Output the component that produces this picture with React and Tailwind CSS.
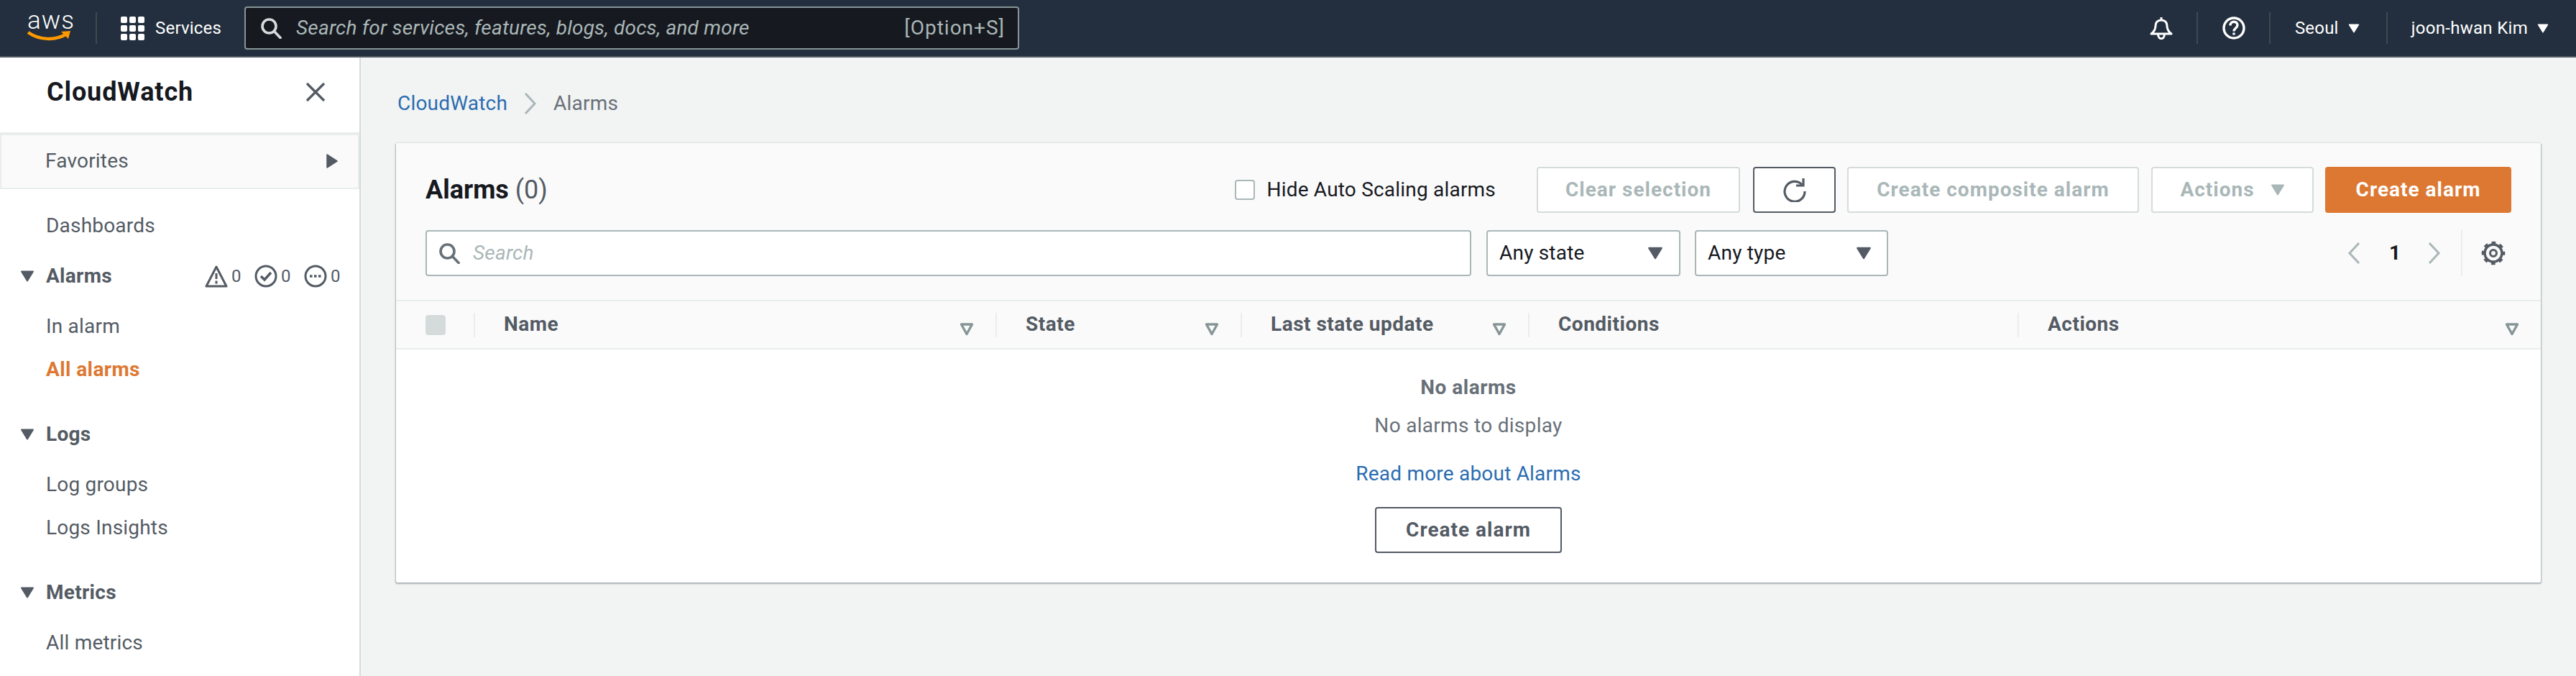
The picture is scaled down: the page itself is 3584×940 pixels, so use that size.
import React from 'react';

const fontStack = "Roboto, 'Noto Sans', sans-serif";

function Caret({ className }) {
  return (
    <svg viewBox="0 0 20 16" className={className}>
      <path d="M2 1.5h16L10 14.5z" fill="currentColor" stroke="currentColor" strokeWidth="2" strokeLinejoin="round" />
    </svg>
  );
}

function SortIcon({ className }) {
  return (
    <svg viewBox="0 0 20 18" className={`w-[20px] h-[18px] text-[#879596] ${className}`}>
      <path d="M2.5 2h15L10 15.5z" fill="none" stroke="currentColor" strokeWidth="3.4" strokeLinejoin="round" />
    </svg>
  );
}

function SearchIcon({ className }) {
  return (
    <svg viewBox="0 0 30 30" className={className} fill="none" stroke="currentColor" strokeWidth="3.6">
      <circle cx="12.5" cy="12.5" r="9.5" />
      <path d="M19.5 19.5L28 28.5" strokeLinecap="square" />
    </svg>
  );
}

function Chevron({ dir, className }) {
  return (
    <svg viewBox="0 0 18 30" className={className} fill="none" stroke="currentColor" strokeWidth="3">
      <path d={dir === 'left' ? 'M16 1L3 15l13 14' : 'M2 1l13 14L2 29'} />
    </svg>
  );
}

function Gear({ className }) {
  return (
    <svg viewBox="0 0 34 34" className={className} fill="none" stroke="currentColor">
      <circle cx="17" cy="17" r="12" strokeWidth="3.4" />
      <circle cx="17" cy="17" r="14.5" strokeWidth="3.6" strokeDasharray="5.6 5.79" strokeDashoffset="2.8" />
      <circle cx="17" cy="17" r="4.5" strokeWidth="3" />
    </svg>
  );
}

function NavItem({ children, top, active, bold, caret }) {
  return (
    <div className={`relative h-[60px] pb-[2px] flex items-center pl-[64px] text-[28px] ${top} ${active ? 'text-[#dd7832] font-bold tracking-[0.4px]' : 'text-[#545b64]'} ${bold ? 'font-bold tracking-[0.3px]' : ''}`}>
      {caret && <Caret className="absolute left-[28px] top-[21px] w-[20px] h-[16px] text-[#545b64]" />}
      {children}
    </div>
  );
}

function Header({ children, width, sort }) {
  return (
    <div className={`relative flex items-center h-[34px] pb-[2px] border-l-2 border-[#eaeded] pl-[40px] text-[28px] font-bold tracking-[0.5px] text-[#545b64] ${width}`}>
      {children}
      {sort && <SortIcon className="absolute right-[30px] top-[14px]" />}
    </div>
  );
}

function Button({ children, width, className }) {
  return (
    <button className={`h-[64px] rounded-[4px] border-2 flex items-center justify-center text-[28px] font-bold tracking-[1px] ${width} ${className}`}>
      {children}
    </button>
  );
}

export default function App() {
  return (
    <div style={{ fontFamily: fontStack }} className="h-[940px] w-[3584px] overflow-hidden flex flex-col bg-[#f2f3f3] tracking-[0.2px]">
      {/* top nav */}
      <nav className="h-[80px] shrink-0 bg-[#232f3e] border-b-2 border-[#545b64] flex items-center text-white">
        <div className="relative ml-[38px] w-[60px] h-[44px] shrink-0">
          <span className="absolute -top-[8px] left-0 text-[35px] leading-[40px] font-light tracking-[1px]">aws</span>
          <svg viewBox="0 0 60 14" className="absolute left-0 top-[26px] w-[60px] h-[14px]">
            <path d="M1 2c16 11 38 12 54 2" fill="none" stroke="#f90" strokeWidth="4.5" />
            <path d="M47 1l13-1-3 11z" fill="#f90" />
          </svg>
        </div>
        <div className="ml-[35px] w-[2px] h-[44px] bg-[#414750] shrink-0" />
        <div className="ml-[33px] grid grid-cols-3 gap-[3px] w-[33px] shrink-0">
          {[0, 1, 2, 3, 4, 5, 6, 7, 8].map((i) => (
            <span key={i} className="h-[9px] rounded-[2px] bg-white" />
          ))}
        </div>
        <span className="ml-[15px] text-[24px] w-[124px] shrink-0">Services</span>
        <div className="w-[1078px] h-[60px] rounded-[4px] border-2 border-[#879596] bg-[#16191f] flex items-center pl-[20px] pr-[18px] text-[#aab7b8] shrink-0">
          <SearchIcon className="w-[30px] h-[30px] text-[#d5dbdb]" />
          <span className="ml-[20px] italic text-[28px]">Search for services, features, blogs, docs, and more</span>
          <span className="ml-auto text-[28px] tracking-[1px]">[Option+S]</span>
        </div>
        <svg viewBox="0 0 32 32" className="ml-auto w-[32px] h-[32px]" fill="none" stroke="white" strokeWidth="3" strokeLinejoin="round">
          <path d="M2 24c4-3 6-6 6-11 0-5 3-8 8-8s8 3 8 8c0 5 2 8 6 11z" />
          <path d="M16 1v4" />
          <path d="M11.500 24c0 9 9 9 9 0" />
        </svg>
        <div className="ml-[33px] w-[2px] h-[44px] bg-[#414750]" />
        <svg viewBox="0 0 32 32" className="ml-[34px] w-[32px] h-[32px]" fill="none" stroke="white" strokeWidth="3.4">
          <circle cx="16" cy="16" r="14" />
          <path d="M11 12.500c0-7 10-7 10-.5 0 4-5 4-5 8.500" />
          <path d="M16 22.500v3" />
        </svg>
        <div className="ml-[33px] w-[2px] h-[44px] bg-[#414750]" />
        <span className="ml-[34px] text-[24px]">Seoul</span>
        <Caret className="ml-[13px] w-[16px] h-[13px]" />
        <div className="ml-[37px] w-[2px] h-[44px] bg-[#414750]" />
        <span className="ml-[33px] text-[24px] tracking-[0.3px]">joon-hwan Kim</span>
        <Caret className="ml-[13px] mr-[38px] w-[16px] h-[13px]" />
      </nav>

      <div className="flex flex-1 min-h-0">
        {/* side nav */}
        <aside className="w-[502px] shrink-0 bg-white border-r-2 border-[#d5dbdb] overflow-hidden">
          <div className="h-[104px] pb-[9px] pl-[65px] pr-[47px] flex items-center justify-between">
            <span className="text-[36px] font-bold tracking-[0.9px] text-[#16191f]">CloudWatch</span>
            <svg viewBox="0 0 28 28" className="w-[28px] h-[28px] text-[#545b64]" fill="none" stroke="currentColor" strokeWidth="3.4">
              <path d="M2 2l24 24M26 2L2 26" />
            </svg>
          </div>
          <div className="h-[79px] pb-[2px] bg-[#fafafa] border-2 border-t-4 border-[#eaeded] pl-[61px] pr-[28px] flex items-center justify-between text-[28px] text-[#545b64]">
            Favorites
            <svg viewBox="0 0 16 20" className="w-[16px] h-[20px]">
              <path d="M1 1v18l14-9z" fill="currentColor" stroke="currentColor" strokeWidth="1.500" strokeLinejoin="round" />
            </svg>
          </div>
          <NavItem top="mt-[22px]">Dashboards</NavItem>
          <NavItem top="mt-[10px]" bold caret>
            Alarms
            <div className="absolute left-[285px] top-[11px] flex items-center text-[#545b64] font-normal text-[24px]">
              <svg viewBox="0 0 32 32" className="w-[32px] h-[32px]" fill="none" stroke="currentColor" strokeWidth="3" strokeLinejoin="round">
                <path d="M16 3L2 30h28z" />
                <path d="M16 12v8M16 22.500v4" />
              </svg>
              <span className="ml-[5px] w-[32px]">0</span>
              <svg viewBox="0 0 32 32" className="w-[32px] h-[32px]" fill="none" stroke="currentColor" strokeWidth="3">
                <circle cx="16" cy="16" r="14" />
                <path d="M9 16l5 5 9-10" strokeWidth="3.500" />
              </svg>
              <span className="ml-[5px] w-[32px]">0</span>
              <svg viewBox="0 0 32 32" className="w-[32px] h-[32px]" fill="none" stroke="currentColor" strokeWidth="3">
                <circle cx="16" cy="16" r="14" />
                <path d="M8 16h16" strokeDasharray="3.500 2.500" strokeWidth="3.500" />
              </svg>
              <span className="ml-[5px]">0</span>
            </div>
          </NavItem>
          <NavItem top="mt-[10px]">In alarm</NavItem>
          <NavItem active>All alarms</NavItem>
          <NavItem top="mt-[30px]" bold caret>Logs</NavItem>
          <NavItem top="mt-[10px]">Log groups</NavItem>
          <NavItem>Logs Insights</NavItem>
          <NavItem top="mt-[30px]" bold caret>Metrics</NavItem>
          <NavItem top="mt-[10px]">All metrics</NavItem>
        </aside>

        {/* main */}
        <main className="flex-1 min-w-0 pl-[49px] pr-[49px]">
          <div className="h-[119px] pt-[8px] flex items-center pl-[2px] text-[28px]">
            <span className="text-[#2b6cb0]">CloudWatch</span>
            <Chevron dir="right" className="ml-[23px] w-[18px] h-[30px] text-[#aab7b8]" />
            <span className="ml-[23px] text-[#687078]">Alarms</span>
          </div>

          <section className="h-[611px] bg-white shadow-[0_1px_2px_1px_rgba(0,28,36,0.3)] rounded-[2px] flex flex-col">
            <div className="h-[220px] bg-[#fafafa] border-b-2 border-[#eaeded] px-[41px] pt-[33px]">
              <div className="flex items-center h-[64px]">
                <h1 className="text-[36px] font-bold tracking-normal text-[#16191f]">
                  Alarms <span className="font-normal text-[#545b64]">(0)</span>
                </h1>
                <span className="ml-auto w-[28px] h-[28px] rounded-[4px] border-2 border-[#aab7b8] bg-white" />
                <span className="ml-[16px] text-[28px] text-[#16191f]">Hide Auto Scaling alarms</span>
                <Button width="w-[283px] ml-[57px]" className="border-[#d5dbdb] bg-white text-[#aab7b8]">Clear selection</Button>
                <Button width="w-[115px] ml-[18px]" className="border-[#545b64] bg-white text-[#545b64]">
                  <svg viewBox="0 0 32 34" className="w-[32px] h-[34px]" fill="none" stroke="currentColor" strokeWidth="3.200">
                    <path d="M26 9.500A14 14 0 1 0 30 19" />
                    <path d="M28 1v10H18" />
                  </svg>
                </Button>
                <Button width="w-[406px] ml-[16px]" className="border-[#d5dbdb] bg-white text-[#aab7b8]">Create composite alarm</Button>
                <Button width="w-[226px] ml-[17px]" className="border-[#d5dbdb] bg-white text-[#aab7b8]">
                  Actions
                  <Caret className="ml-[22px] w-[20px] h-[16px]" />
                </Button>
                <Button width="w-[259px] ml-[16px]" className="border-[#dd7832] bg-[#dd7832] text-white">Create alarm</Button>
              </div>
              <div className="flex items-center h-[64px] mt-[24px]">
                <div className="w-[1455px] h-[64px] rounded-[4px] border-2 border-[#aab7b8] bg-white flex items-center pl-[16px]">
                  <SearchIcon className="w-[30px] h-[30px] text-[#687078]" />
                  <span className="ml-[18px] italic text-[28px] text-[#aab7b8]">Search</span>
                </div>
                <div className="ml-[21px] w-[270px] h-[64px] rounded-[4px] border-2 border-[#aab7b8] bg-white flex items-center justify-between pl-[16px] pr-[22px] text-[28px] text-[#16191f]">
                  Any state
                  <Caret className="w-[22px] h-[18px] text-[#545b64]" />
                </div>
                <div className="ml-[20px] w-[269px] h-[64px] rounded-[4px] border-2 border-[#aab7b8] bg-white flex items-center justify-between pl-[16px] pr-[21px] text-[28px] text-[#16191f]">
                  Any type
                  <Caret className="w-[22px] h-[18px] text-[#545b64]" />
                </div>
                <Chevron dir="left" className="ml-auto w-[18px] h-[30px] text-[#aab7b8]" />
                <span className="ml-[40px] w-[13px] text-[28px] font-bold text-[#16191f]">1</span>
                <Chevron dir="right" className="ml-[41px] w-[18px] h-[30px] text-[#aab7b8]" />
                <div className="ml-[28px] w-[2px] h-[64px] bg-[#eaeded]" />
                <Gear className="ml-[26px] mr-[8px] w-[34px] h-[34px] text-[#545b64]" />
              </div>
            </div>

            <div className="h-[67px] bg-[#fafafa] border-b-2 border-[#eaeded] flex items-center pl-[41px]">
              <span className="w-[28px] h-[28px] rounded-[4px] bg-[#d5dbdb]" />
              <div className="ml-[39px] flex-1 flex">
                <Header width="w-[726px]" sort>Name</Header>
                <Header width="w-[341px]" sort>State</Header>
                <Header width="w-[400px]" sort>Last state update</Header>
                <Header width="w-[681px]">Conditions</Header>
                <Header width="flex-1" sort>Actions</Header>
              </div>
            </div>

            <div className="flex flex-col items-center pt-[34px]">
              <p className="h-[38px] flex items-center text-[28px] font-bold tracking-[0.5px] text-[#687078]">No alarms</p>
              <p className="mt-[15px] h-[38px] flex items-center text-[28px] tracking-[0.3px] text-[#687078]">No alarms to display</p>
              <a className="mt-[29px] h-[38px] flex items-center text-[28px] text-[#2b6cb0]">Read more about Alarms</a>
              <Button width="w-[260px] mt-[27px]" className="border-[#545b64] bg-white text-[#545b64]">Create alarm</Button>
            </div>
          </section>
        </main>
      </div>
    </div>
  );
}
